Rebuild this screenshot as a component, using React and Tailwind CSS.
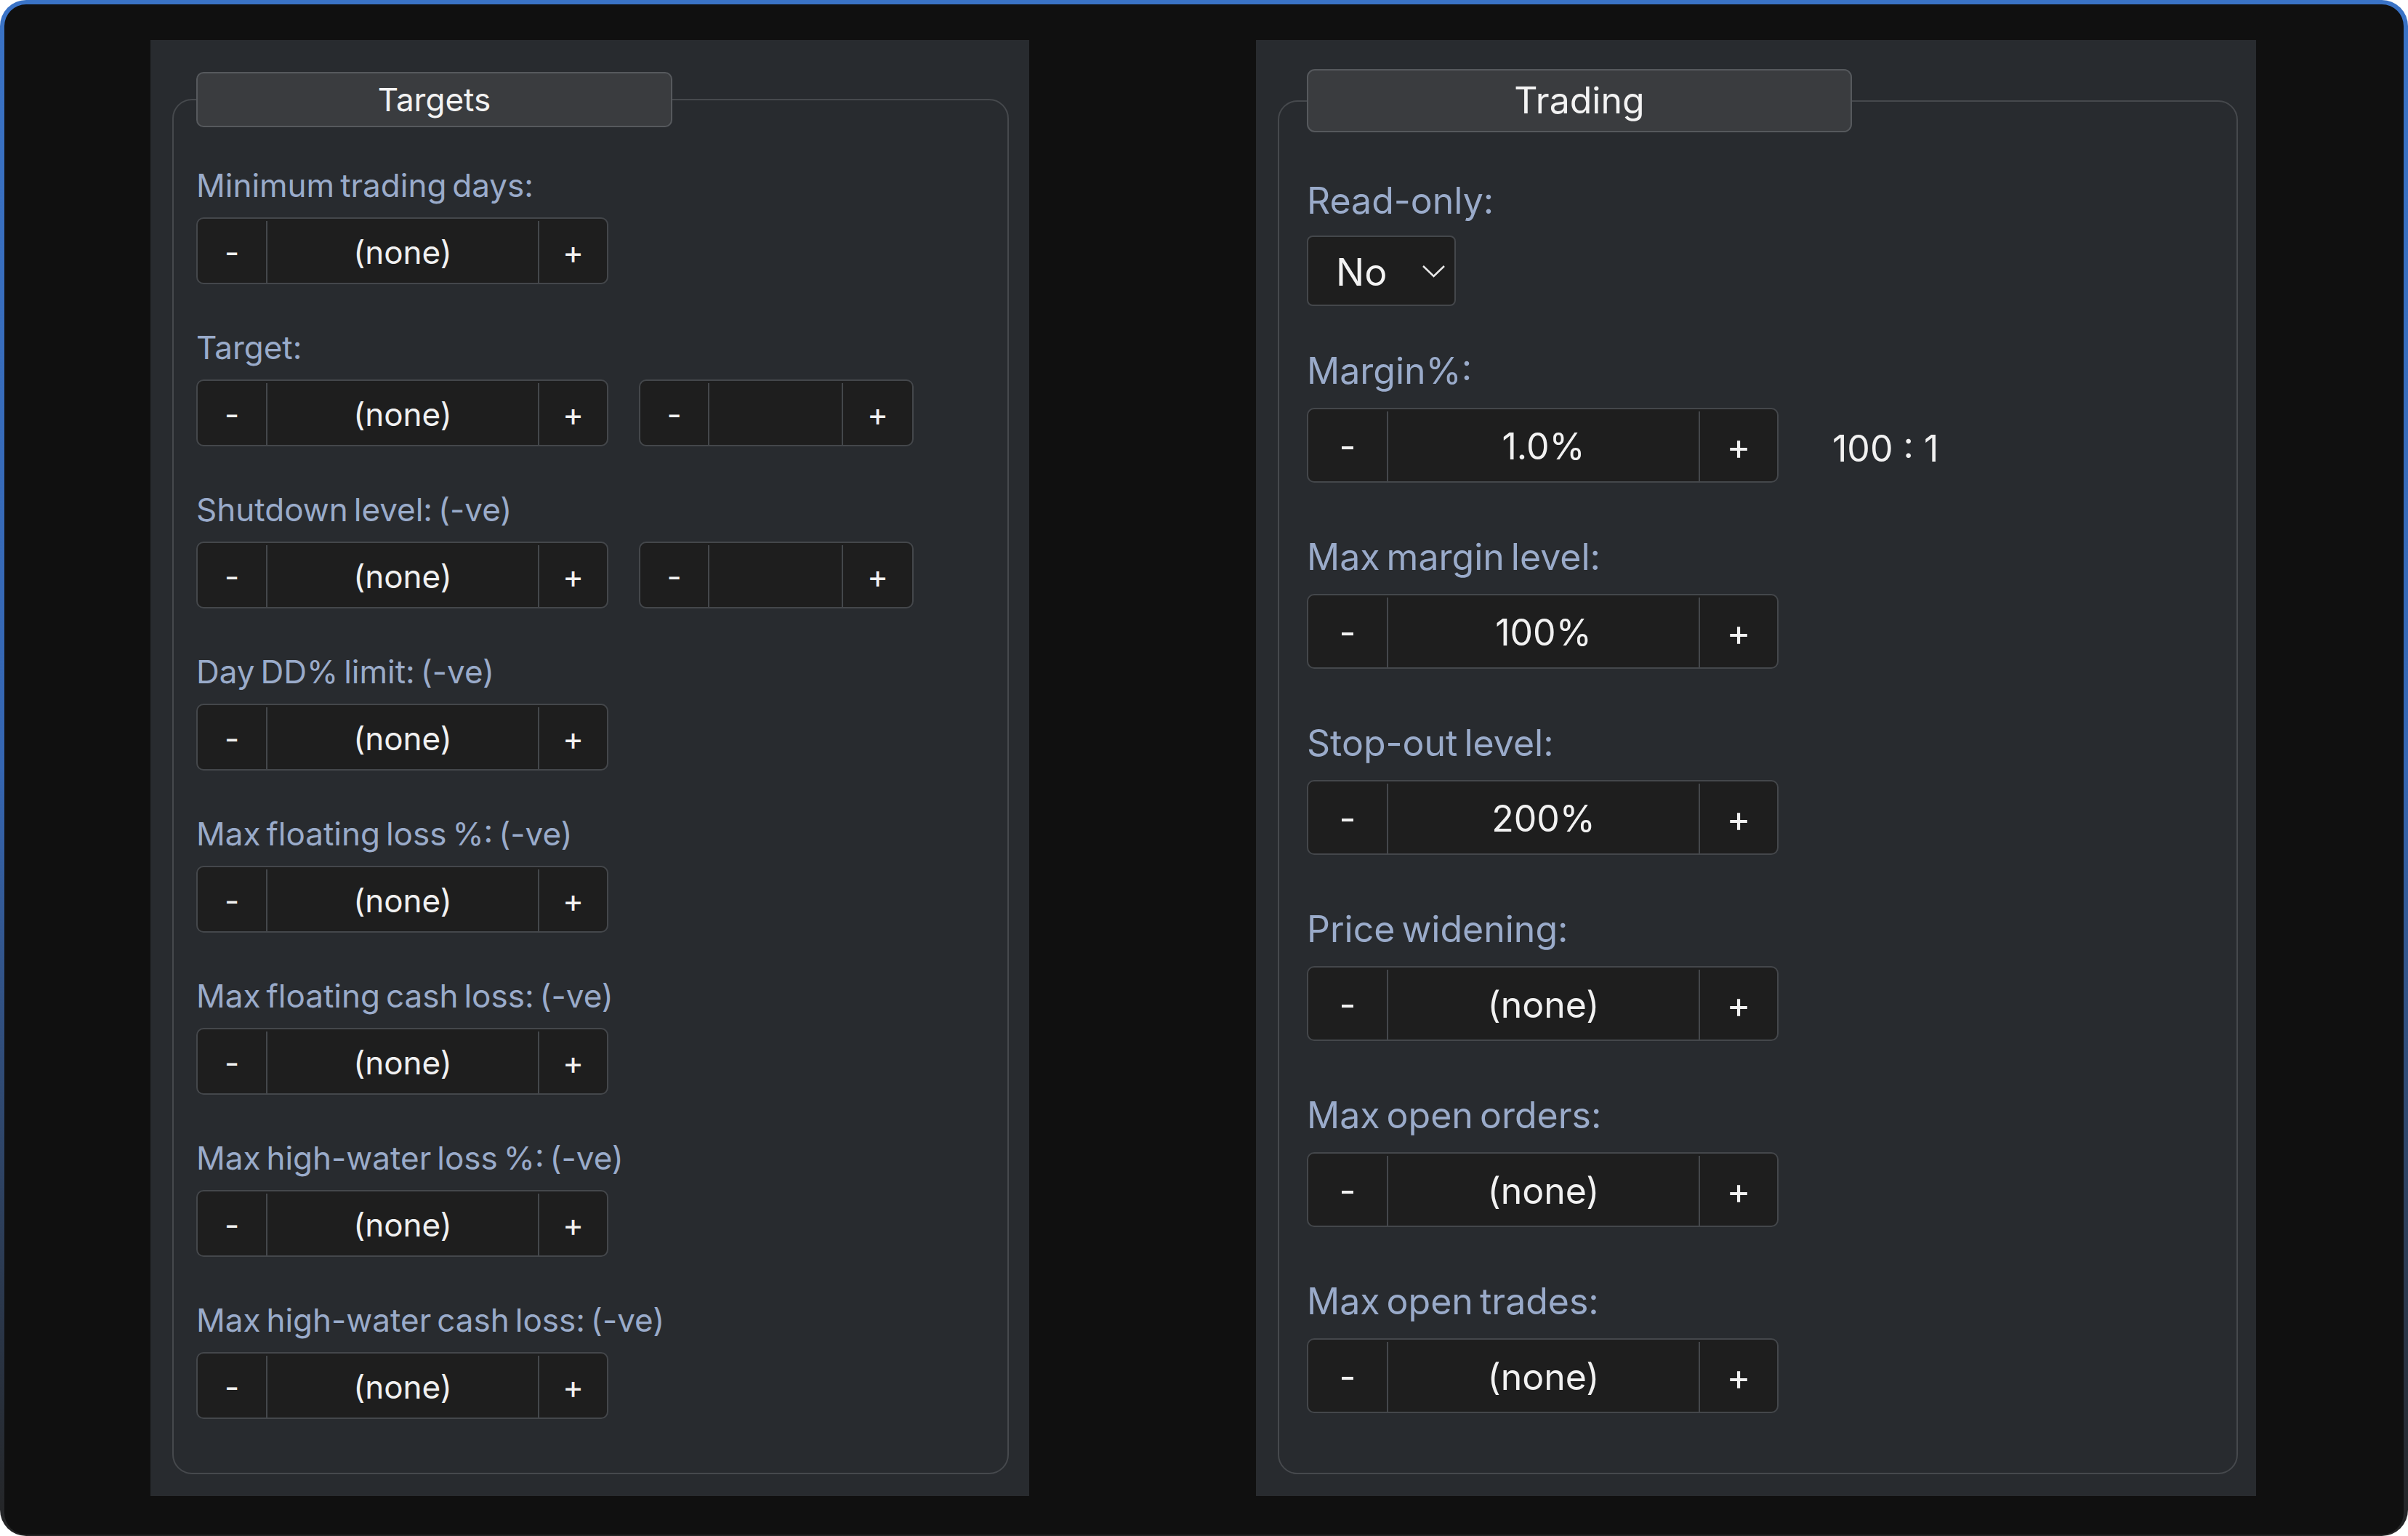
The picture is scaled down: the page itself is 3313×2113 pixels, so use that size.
import React from "react";

const L = {
  label: "h-[52px] leading-[52px] text-[44px] text-[#9aabca] [word-spacing:-0.1em] whitespace-nowrap",
  text: "text-[44px] text-[#f1f1f1]",
};
const R = {
  label: "h-[60px] leading-[60px] text-[50px] text-[#9aabca] [word-spacing:-0.1em] whitespace-nowrap",
  text: "text-[50px] text-[#f1f1f1]",
};

function Stepper({ outer, minus, value, val, text }) {
  return (
    <div className={"flex rounded-[10px] border-2 border-[#44474b] bg-[#1e1e1e] overflow-hidden " + outer}>
      <div className={"flex items-center justify-center " + minus + " " + text}>-</div>
      <div className={"flex items-center justify-center border-x-2 border-[#44474b] " + value + " " + text}>{val}</div>
      <div className={"flex flex-1 items-center justify-center " + text}>+</div>
    </div>
  );
}

function LStep({ val }) {
  return <Stepper outer="w-[567px] h-[92px] pt-[3px]" minus="w-[94px]" value="w-[376px]" val={val} text={L.text} />;
}
function LStepSmall() {
  return <Stepper outer="w-[378px] h-[92px] pt-[3px]" minus="w-[93px]" value="w-[186px]" val="" text={L.text} />;
}
function RStep({ val }) {
  return <Stepper outer="w-[649px] h-[103px] pt-[3px]" minus="w-[108px]" value="w-[431px]" val={val} text={R.text} />;
}

function LRow({ label, double }) {
  return (
    <div className="flex flex-col">
      <div className={L.label}>{label}</div>
      <div className="mt-[18px] flex gap-[42px]">
        <LStep val="(none)" />
        {double && <LStepSmall />}
      </div>
    </div>
  );
}

function RRow({ label, val, extra }) {
  return (
    <div className="flex flex-col">
      <div className={R.label}>{label}</div>
      <div className="mt-[21px] flex items-center">
        <RStep val={val} />
        {extra && <div className={"ml-[74px] pt-[10px] " + R.text}>{extra}</div>}
      </div>
    </div>
  );
}

export default function App() {
  return (
    <div className="w-[3313px] h-[2113px] bg-white [font-family:Inter,'Noto_Sans',sans-serif]">
      <div className="h-full rounded-[36px] bg-linear-to-b from-[#3a73c6] via-[#3566b2] to-[#242424] pt-[6px] px-[6px] pb-[2px]">
        <div className="h-full rounded-[30px] bg-[#101010] flex pt-[49px] pl-[201px]">
          {/* Targets panel */}
          <div className="w-[1209px] h-[2003px] bg-[#282b2f] pt-[44px] pl-[30px] pr-[28px] pb-[30px]">
            <fieldset className="h-full rounded-[27px] border-2 border-[#46494d] pl-[31px] pt-[54px]">
              <legend className="w-[655px] h-[76px] rounded-[10px] border-2 border-[#56595d] bg-[#3a3c3f] text-left">
                <div className="w-full text-center leading-[72px] text-[44px] text-[#f3f3f3]">Targets</div>
              </legend>
              <div className="flex flex-col gap-[61px]">
                <LRow label="Minimum trading days:" />
                <LRow label="Target:" double />
                <LRow label="Shutdown level: (-ve)" double />
                <LRow label="Day DD% limit: (-ve)" />
                <LRow label="Max floating loss %: (-ve)" />
                <LRow label="Max floating cash loss: (-ve)" />
                <LRow label="Max high-water loss %: (-ve)" />
                <LRow label="Max high-water cash loss: (-ve)" />
              </div>
            </fieldset>
          </div>

          {/* Trading panel */}
          <div className="ml-[312px] w-[1376px] h-[2003px] bg-[#282b2f] pt-[40px] pl-[30px] pr-[25px] pb-[30px]">
            <fieldset className="h-full rounded-[27px] border-2 border-[#46494d] pl-[38px] pt-[64px]">
              <legend className="w-[750px] h-[87px] rounded-[11px] border-2 border-[#56595d] bg-[#3a3c3f] text-left">
                <div className="w-full text-center leading-[83px] text-[50px] text-[#f3f3f3]">Trading</div>
              </legend>
              <div className="flex flex-col">
                <div className={R.label}>Read-only:</div>
                <div className="mt-[18px] w-[205px] h-[97px] rounded-[8px] border-2 border-[#44474b] bg-[#1e1e1e] flex items-center pl-[38px] pr-[12px]">
                  <span className="text-[52px] text-[#f3f3f3] leading-none pt-[4px]">No</span>
                  <svg className="ml-auto" width="33" height="20" viewBox="0 0 33 20">
                    <polyline points="2,3 16.5,17 31,3" fill="none" stroke="#e8e8e8" strokeWidth="2.5" />
                  </svg>
                </div>
              </div>
              <div className="mt-[59px] flex flex-col gap-[72px]">
                <RRow label="Margin%:" val="1.0%" extra="100 : 1" />
                <RRow label="Max margin level:" val="100%" />
                <RRow label="Stop-out level:" val="200%" />
                <RRow label="Price widening:" val="(none)" />
                <RRow label="Max open orders:" val="(none)" />
                <RRow label="Max open trades:" val="(none)" />
              </div>
            </fieldset>
          </div>
        </div>
      </div>
    </div>
  );
}
